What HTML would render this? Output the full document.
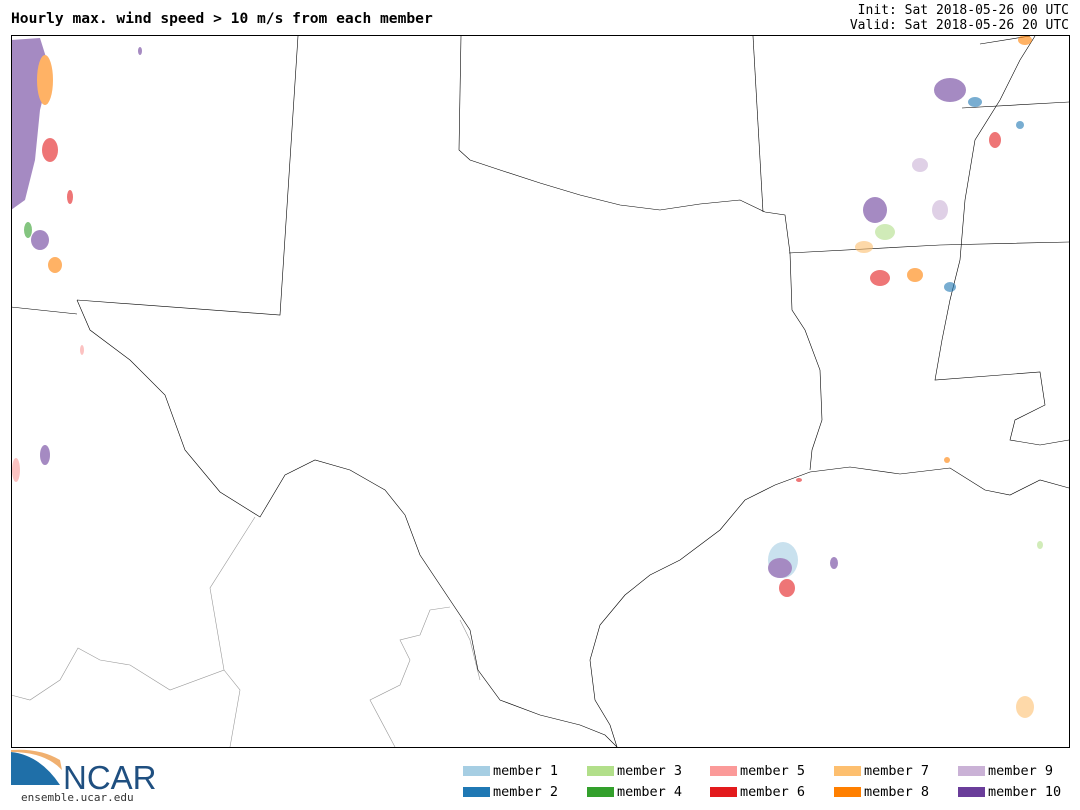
<!DOCTYPE html><html><head><style>
body{margin:0;width:1080px;height:810px;background:#fff;overflow:hidden;font-family:"DejaVu Sans Mono",monospace;position:relative}
.t{position:absolute;font-size:14px;color:#000}
.lg{position:absolute;font-size:13.5px;display:flex;align-items:center}
.lg i{display:inline-block;width:27px;height:10px;margin-right:3px}
</style></head><body>
<div class="t" style="left:11px;top:10px;font-weight:bold;font-size:14.6px">Hourly max. wind speed &gt; 10 m/s from each member</div>
<div class="t" style="right:11px;top:3px;font-size:13px;text-align:right;line-height:15px">Init: Sat 2018-05-26 00 UTC<br>Valid: Sat 2018-05-26 20 UTC</div>
<svg width="1080" height="810" style="position:absolute;left:0;top:0">
<g fill="none" stroke="#999" stroke-width="0.6">
<path d="M255,517 L210,588 L224,670 L170,690 L130,665 L100,660 L78,648 L60,680 L30,700 L11,695"/>
<path d="M224,670 L240,690 L230,747"/>
<path d="M450,607 L430,610 L420,635 L400,640 L410,660 L400,685 L370,700 L395,747"/>
<path d="M460,620 L470,640 L480,680"/>
</g>
<g fill="none" stroke="#000" stroke-width="0.6">
<path d="M11,307 L77,314"/>
<path d="M77,300 L280,315 L298,36"/>
<path d="M77,300 L90,330 L130,360 L165,395 L185,450 L220,492 L260,517 L285,475 L315,460 L350,470 L385,490 L405,515 L420,555 L450,600 L470,630 L478,670 L500,700 L540,715 L580,725 L605,735 L617,747"/>
<path d="M617,747 L610,725 L595,700 L590,660 L600,625 L625,595 L650,575 L680,560 L720,530 L745,500 L775,485 L810,472 L850,467 L900,474 L950,468 L985,490 L1010,495 L1040,480 L1069,488"/>
<path d="M810,470 L812,450 L822,420 L820,370 L805,330 L792,310 L790,253 L785,215 L765,212 L740,200 L700,204 L660,210 L620,205 L580,195 L540,183 L500,170 L470,160 L459,150 L461,36"/>
<path d="M789,253 L940,245 L1069,242"/>
<path d="M753,36 L763,212"/>
<path d="M962,108 L1069,102"/>
<path d="M980,44 L1030,36"/>
<path d="M1035,36 L1020,60 L1000,100 L975,140 L965,200 L960,260 L950,300 L942,340 L935,380 L1040,372 L1045,405 L1015,420 L1010,440 L1040,445 L1069,440"/>
</g>
<g opacity="0.6">
<path d="M11,40 L40,38 L50,70 L40,110 L35,160 L25,200 L11,210Z" fill="#6a3d9a"/>
<ellipse cx="45" cy="80" rx="8" ry="25" fill="#ff7f00"/>
<ellipse cx="50" cy="150" rx="8" ry="12" fill="#e31a1c"/>
<ellipse cx="40" cy="240" rx="9" ry="10" fill="#6a3d9a"/>
<ellipse cx="55" cy="265" rx="7" ry="8" fill="#ff7f00"/>
<ellipse cx="28" cy="230" rx="4" ry="8" fill="#33a02c"/>
<ellipse cx="70" cy="197" rx="3" ry="7" fill="#e31a1c"/>
<ellipse cx="45" cy="455" rx="5" ry="10" fill="#6a3d9a"/>
<ellipse cx="16" cy="470" rx="4" ry="12" fill="#fb9a99"/>
<ellipse cx="950" cy="90" rx="16" ry="12" fill="#6a3d9a"/>
<ellipse cx="975" cy="102" rx="7" ry="5" fill="#1f78b4"/>
<ellipse cx="875" cy="210" rx="12" ry="13" fill="#6a3d9a"/>
<ellipse cx="885" cy="232" rx="10" ry="8" fill="#b2df8a"/>
<ellipse cx="864" cy="247" rx="9" ry="6" fill="#fdbf6f"/>
<ellipse cx="880" cy="278" rx="10" ry="8" fill="#e31a1c"/>
<ellipse cx="915" cy="275" rx="8" ry="7" fill="#ff7f00"/>
<ellipse cx="920" cy="165" rx="8" ry="7" fill="#cab2d6"/>
<ellipse cx="940" cy="210" rx="8" ry="10" fill="#cab2d6"/>
<ellipse cx="995" cy="140" rx="6" ry="8" fill="#e31a1c"/>
<ellipse cx="950" cy="287" rx="6" ry="5" fill="#1f78b4"/>
<ellipse cx="1020" cy="125" rx="4" ry="4" fill="#1f78b4"/>
<ellipse cx="1025" cy="40" rx="7" ry="5" fill="#ff7f00"/>
<ellipse cx="783" cy="560" rx="15" ry="18" fill="#a6cee3"/>
<ellipse cx="780" cy="568" rx="12" ry="10" fill="#6a3d9a"/>
<ellipse cx="787" cy="588" rx="8" ry="9" fill="#e31a1c"/>
<ellipse cx="834" cy="563" rx="4" ry="6" fill="#6a3d9a"/>
<ellipse cx="1025" cy="707" rx="9" ry="11" fill="#fdbf6f"/>
<ellipse cx="799" cy="480" rx="3" ry="2" fill="#e31a1c"/>
<ellipse cx="947" cy="460" rx="3" ry="3" fill="#ff7f00"/>
<ellipse cx="140" cy="51" rx="2" ry="4" fill="#6a3d9a"/>
<ellipse cx="82" cy="350" rx="2" ry="5" fill="#fb9a99"/>
<ellipse cx="1040" cy="545" rx="3" ry="4" fill="#b2df8a"/>
</g>
<rect x="11.5" y="35.5" width="1058" height="712" fill="none" stroke="#000" stroke-width="1"/>
<path d="M11,752 Q40,755 60,785 L11,785Z" fill="#1f6fa8"/>
<path d="M11,752 Q45,752 62,770 L60,760 Q40,748 11,750Z" fill="#f0b070"/>
<text x="63" y="789" font-family="Liberation Sans,sans-serif" font-size="33" fill="#1f4f80">NCAR</text>
</svg>
<div class="t" style="left:21px;top:791px;font-size:11px;color:#333">ensemble.ucar.edu</div>
<div class="lg" style="left:463px;top:763px"><i style="background:#a6cee3"></i>member 1</div>
<div class="lg" style="left:463px;top:784px"><i style="background:#1f78b4"></i>member 2</div>
<div class="lg" style="left:587px;top:763px"><i style="background:#b2df8a"></i>member 3</div>
<div class="lg" style="left:587px;top:784px"><i style="background:#33a02c"></i>member 4</div>
<div class="lg" style="left:710px;top:763px"><i style="background:#fb9a99"></i>member 5</div>
<div class="lg" style="left:710px;top:784px"><i style="background:#e31a1c"></i>member 6</div>
<div class="lg" style="left:834px;top:763px"><i style="background:#fdbf6f"></i>member 7</div>
<div class="lg" style="left:834px;top:784px"><i style="background:#ff7f00"></i>member 8</div>
<div class="lg" style="left:958px;top:763px"><i style="background:#cab2d6"></i>member 9</div>
<div class="lg" style="left:958px;top:784px"><i style="background:#6a3d9a"></i>member 10</div>
</body></html>
